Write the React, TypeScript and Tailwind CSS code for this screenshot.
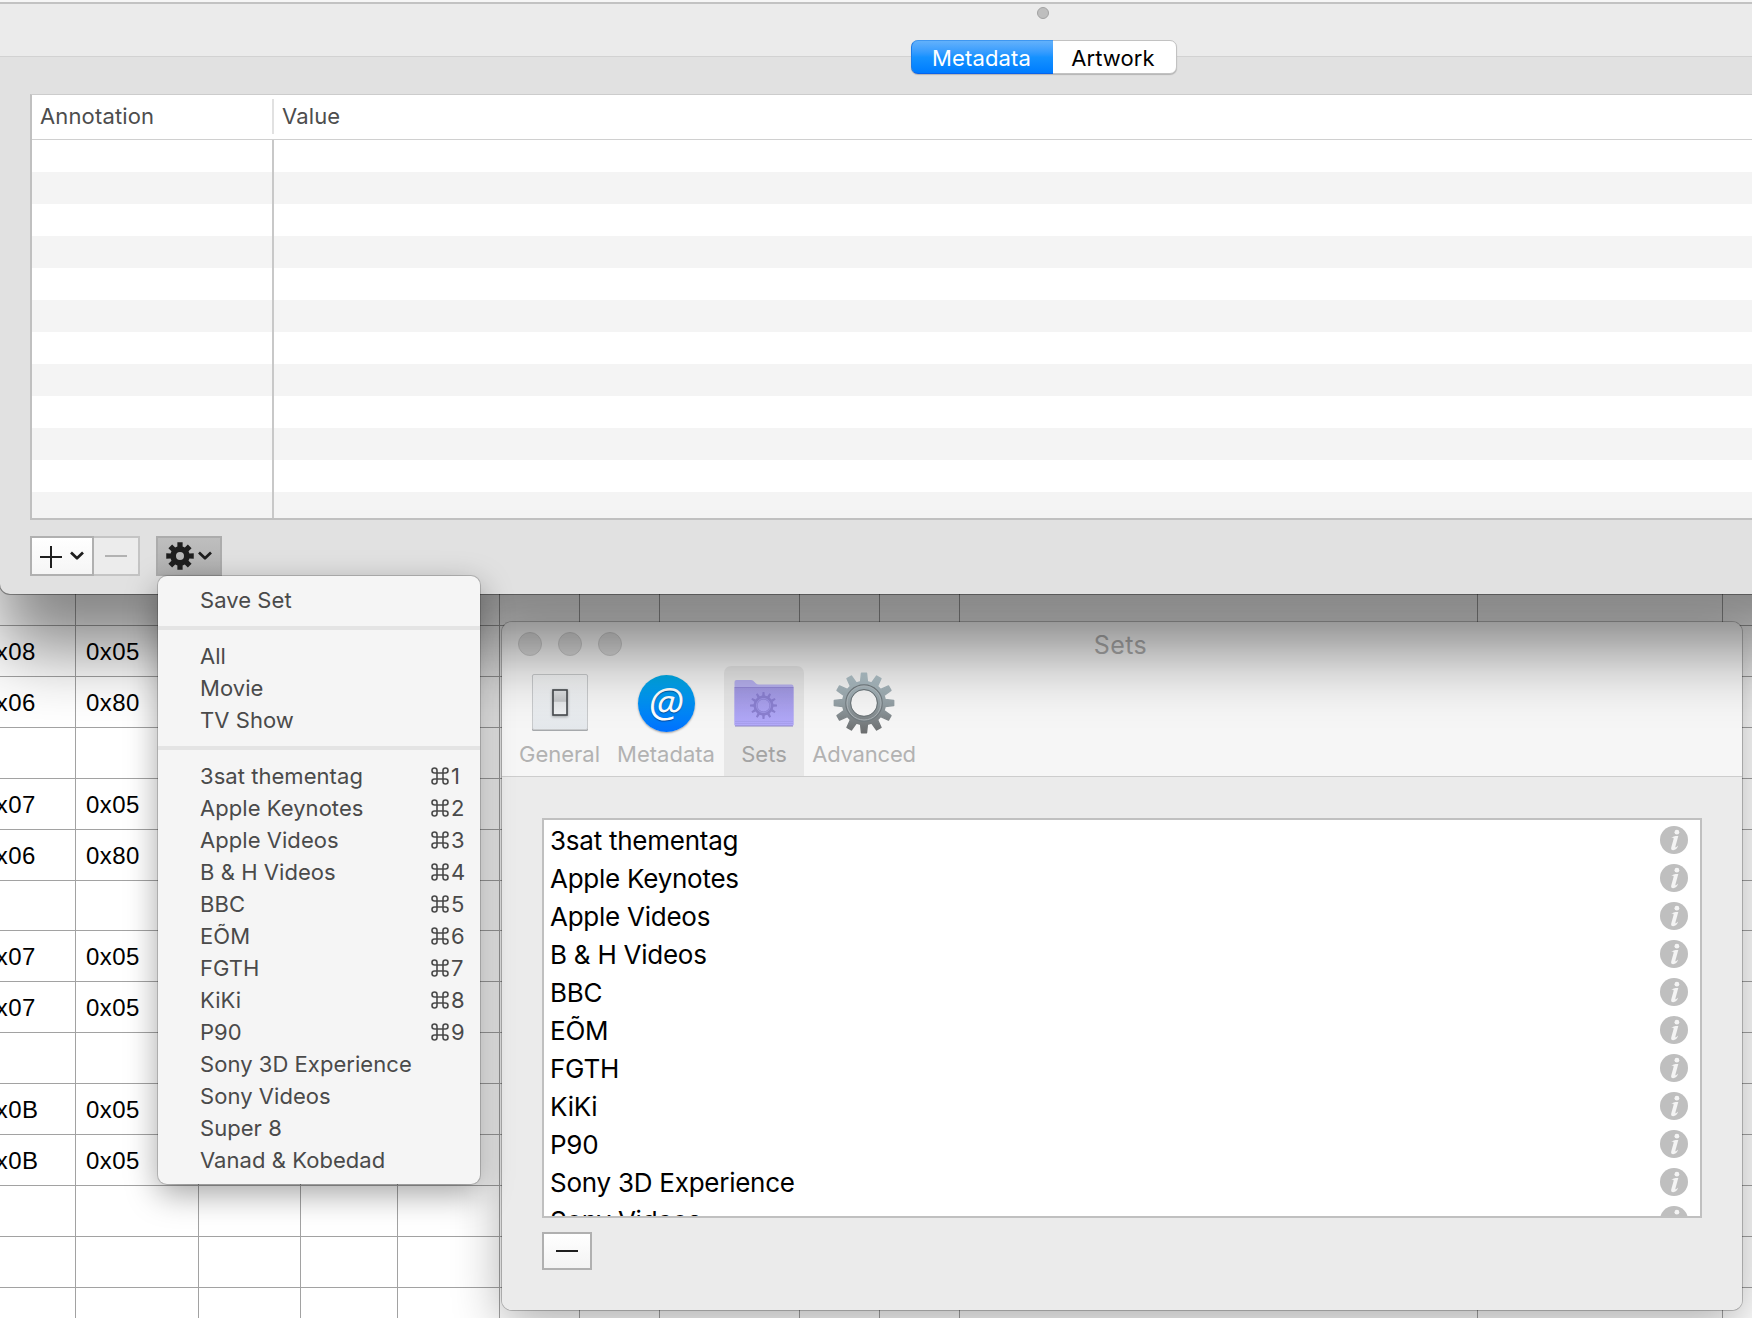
import React from "react";

const LIST = [
  "3sat thementag",
  "Apple Keynotes",
  "Apple Videos",
  "B & H Videos",
  "BBC",
  "EÕM",
  "FGTH",
  "KiKi",
  "P90",
  "Sony 3D Experience",
  "Sony Videos",
  "Super 8",
  "Vanad & Kobedad",
];

const HEX_ROWS: [string, string][] = [
  ["", ""],
  ["0x08", "0x05"],
  ["0x06", "0x80"],
  ["", ""],
  ["0x07", "0x05"],
  ["0x06", "0x80"],
  ["", ""],
  ["0x07", "0x05"],
  ["0x07", "0x05"],
  ["", ""],
  ["0x0B", "0x05"],
  ["0x0B", "0x05"],
  ["", ""],
  ["", ""],
  ["", ""],
];

// Builds a toothed ring outline; tooth flanks taper from root to tip.
function gearPath(n: number, outer: number, root: number, tip: number, base: number) {
  const pts: string[] = [];
  for (let i = 0; i < n; i++) {
    const a = (i / n) * Math.PI * 2 - Math.PI / 2;
    const p = (r: number, d: number) =>
      `${(r * Math.cos(a + d)).toFixed(2)} ${(r * Math.sin(a + d)).toFixed(2)}`;
    pts.push(`L${p(root, -base)}L${p(outer, -tip)}L${p(outer, tip)}L${p(root, base)}`);
  }
  return "M" + pts.join("").slice(1) + "Z";
}

const ring = (r: number) => `M${r} 0A${r} ${r} 0 1 0 ${-r} 0A${r} ${r} 0 1 0 ${r} 0Z`;

function Chevron() {
  return (
    <svg width="14" height="10" viewBox="0 0 14 10" fill="none" stroke="#1e1e1e" strokeWidth="2.7">
      <path d="M1 1.5L7 7.3L13 1.5" strokeLinejoin="round" />
    </svg>
  );
}

function InfoIcon() {
  return (
    <svg width="28" height="28" viewBox="0 0 28 28" className="shrink-0">
      <circle cx="14" cy="14" r="14" fill="#bfbfbf" />
      <circle cx="16.9" cy="6.2" r="2.4" fill="#f4f4f4" />
      <path
        d="M10.8 12.2C12.8 10.4 15.2 9.9 18.3 10L15.4 20.6C15.1 21.9 16.2 21.6 18.2 19.6C17.4 22.6 15.3 24.2 13.2 24.2C11.4 24.2 10.8 23.1 11.3 21.2L13.6 13C13.9 11.7 12.7 11.6 10.8 12.2Z"
        fill="#f4f4f4"
      />
    </svg>
  );
}

function HexTable() {
  return (
    <div className="flex flex-col pt-[575px] font-['Liberation_Sans',Arial,sans-serif] text-[24px] tracking-[0.4px] text-black">
      {HEX_ROWS.map(([a, b], i) => (
        <div
          key={i}
          className={`flex shrink-0 border-b border-[#a2a2a2] leading-[51px] ${i === 6 ? "h-[50px]" : "h-[51px]"}`}
        >
          <div className="w-[76px] shrink-0 border-r border-[#a2a2a2]">
            <span className="-ml-[18px]">{a}</span>
          </div>
          <div className="w-[123px] shrink-0 border-r border-[#a2a2a2] pl-[10px]">{b}</div>
          <div className="w-[102px] shrink-0 border-r border-[#a2a2a2]" />
          <div className="w-[97px] shrink-0 border-r border-[#a2a2a2]" />
          <div className="w-[102px] shrink-0 border-r border-[#a2a2a2]" />
          <div className="w-[80px] shrink-0 border-r border-[#a2a2a2]" />
          <div className="w-[80px] shrink-0 border-r border-[#a2a2a2]" />
          <div className="w-[140px] shrink-0 border-r border-[#a2a2a2]" />
          <div className="w-[80px] shrink-0 border-r border-[#a2a2a2]" />
          <div className="w-[80px] shrink-0 border-r border-[#a2a2a2]" />
          <div className="w-[518px] shrink-0 border-r border-[#a2a2a2]" />
          <div className="w-[245px] shrink-0 border-r border-[#a2a2a2]" />
        </div>
      ))}
    </div>
  );
}

function GeneralIcon() {
  return (
    <svg width="58" height="58" viewBox="0 0 58 58">
      <defs>
        <linearGradient id="plate" x1="0" y1="0" x2="0" y2="1">
          <stop offset="0" stopColor="#f4f5f6" />
          <stop offset="1" stopColor="#e4e8ec" />
        </linearGradient>
        <linearGradient id="rocker" x1="0" y1="0" x2="0" y2="1">
          <stop offset="0" stopColor="#e2e4e6" />
          <stop offset="0.45" stopColor="#c4c6c8" />
          <stop offset="0.5" stopColor="#e6e8ea" />
          <stop offset="1" stopColor="#eef0f2" />
        </linearGradient>
        <filter id="soft" x="-50%" y="-50%" width="200%" height="200%">
          <feGaussianBlur stdDeviation="1.5" />
        </filter>
      </defs>
      <rect x="1" y="1" width="56" height="56" rx="1.5" fill="#a6a9ac" />
      <rect x="1.5" y="0.5" width="55" height="55" rx="1.5" fill="url(#plate)" stroke="#c8cacc" />
      <rect x="21" y="16" width="16" height="27" fill="#8a8d90" filter="url(#soft)" opacity="0.7" />
      <rect x="22" y="16" width="14" height="25" fill="url(#rocker)" stroke="#45494d" strokeWidth="1.6" />
    </svg>
  );
}

function AtIcon() {
  return (
    <div className="mt-px flex h-[57px] w-[57px] items-center justify-center rounded-full bg-linear-to-b from-[#00ace8] to-[#0070ff] font-['Open_Sans',sans-serif] text-[41px] leading-none text-white shadow-[0_1px_2px_rgba(0,0,0,0.35)]">
      <span className="-mt-[5px] italic [text-shadow:0_1px_1px_rgba(0,40,100,0.6)]">@</span>
    </div>
  );
}

function FolderIcon() {
  return (
    <svg width="60" height="50" viewBox="0 0 60 50" className="mt-[5px]">
      <defs>
        <linearGradient id="folder" x1="0" y1="0" x2="0" y2="1">
          <stop offset="0" stopColor="#a198e2" />
          <stop offset="1" stopColor="#b3aafb" />
        </linearGradient>
      </defs>
      <path d="M0.5 3Q0.5 1 2.5 1H17Q19 1 20.5 3L22 4.5Q23 5.5 25 5.5H57.5Q59.5 5.5 59.5 7.5V46H0.5Z" fill="#b6b0ee" />
      <path d="M0.5 9H59.5V45.5Q59.5 47 58 47H2Q0.5 47 0.5 45.5Z" fill="url(#folder)" />
      <path d="M0.5 8.5H59.5" stroke="#9389d6" />
      <path d="M1 42.5H59M1 44.5H59" stroke="#a39be8" strokeWidth="0.7" />
      <path d="M1 47H59" stroke="#8f87c4" />
      <g transform="translate(29.5 26.5)">
        <path d={gearPath(12, 13.5, 10, 0.07, 0.13) + ring(6)} fill="#8a7fd0" fillRule="evenodd" />
        <circle r="7" fill="none" stroke="#a79fee" strokeWidth="0.8" />
      </g>
    </svg>
  );
}

function AdvancedIcon() {
  return (
    <svg width="64" height="64" viewBox="-32 -32 64 64" className="-mt-[3px]">
      <defs>
        <linearGradient id="steel" x1="0" y1="0" x2="0" y2="1">
          <stop offset="0" stopColor="#b4c6cd" />
          <stop offset="0.5" stopColor="#95a1a6" />
          <stop offset="1" stopColor="#6c6e6f" />
        </linearGradient>
      </defs>
      <path
        d={gearPath(12, 29.8, 21.5, 0.085, 0.16) + ring(13.5)}
        fill="url(#steel)"
        fillRule="evenodd"
        stroke="url(#steel)"
        strokeWidth="1.4"
        strokeLinejoin="round"
      />
      <circle r="18.2" fill="none" stroke="#737c80" strokeWidth="1.2" />
      <circle r="17" fill="none" stroke="#b5bdc0" strokeWidth="0.8" />
      <circle r="13.5" fill="none" stroke="#6c7477" strokeWidth="1" />
    </svg>
  );
}

function ToolItem({
  label,
  children,
  className,
  text,
}: {
  label: string;
  children: React.ReactNode;
  className: string;
  text?: string;
}) {
  return (
    <div className={`flex h-[110px] shrink-0 flex-col items-center pt-[8px] ${className}`}>
      <div className="flex h-[64px] items-start justify-center">{children}</div>
      <span className={`text-[22px] leading-[32px] whitespace-nowrap ${text ?? "text-[#b2b2b2]"}`}>{label}</span>
    </div>
  );
}

function SetsWindow() {
  return (
    <div className="absolute top-[622px] left-[502px] flex h-[688px] w-[1240px] flex-col overflow-hidden rounded-[10px] bg-[#ebebeb]">
      <div className="flex h-[155px] shrink-0 flex-col border-b border-[#cdcdcd] bg-[#f6f6f6]">
        <div className="grid h-[44px] grid-cols-3 items-center">
          <div className="flex gap-4 pl-4">
            <i className="size-6 rounded-full border border-[#cccccc] bg-[#dcdcdc]" />
            <i className="size-6 rounded-full border border-[#cccccc] bg-[#dcdcdc]" />
            <i className="size-6 rounded-full border border-[#cccccc] bg-[#dcdcdc]" />
          </div>
          <span className="pt-[3px] pr-[3px] text-center text-[25px] tracking-[0.4px] text-[#aeaeae]">Sets</span>
        </div>
        <div className="flex pl-[13px]">
          <ToolItem label="General" className="w-[89px]">
            <GeneralIcon />
          </ToolItem>
          <ToolItem label="Metadata" className="w-[120px] pl-[4px]">
            <AtIcon />
          </ToolItem>
          <ToolItem label="Sets" className="w-[80px] rounded-t-[7px] bg-[#e7e7e7]" text="text-[#a3a3a3]">
            <FolderIcon />
          </ToolItem>
          <ToolItem label="Advanced" className="w-[120px]" text="text-[#b2b2b2] tracking-[-0.2px]">
            <AdvancedIcon />
          </ToolItem>
        </div>
      </div>
      <div className="mx-10 mt-[41px] h-[400px] shrink-0 overflow-hidden border-2 border-[#c0c0c0] bg-white pt-px text-[26px] tracking-[-0.25px] text-black">
        {LIST.map((s) => (
          <div key={s} className="flex h-[38px] items-center justify-between pr-3 pl-[6px]">
            <span className="pt-px">{s}</span>
            <InfoIcon />
          </div>
        ))}
      </div>
      <div className="mt-[14px] ml-10 flex h-[38px] w-[50px] items-center justify-center border-2 border-[#b0b0b0] bg-linear-to-b from-white to-[#f3f3f3]">
        <i className="h-[2px] w-[22px] bg-[#1e1e1e]" />
      </div>
    </div>
  );
}

function MainWindow() {
  return (
    <div className="absolute top-0 left-0 flex h-[594px] w-[1900px] flex-col rounded-bl-[10px] bg-[#e1e1e1] shadow-[0_0_0_1px_rgba(0,0,0,0.35),0_56px_70px_rgba(0,0,0,0.48)]">
      <div className="h-[57px] shrink-0 border-b border-[#d2d2d2] bg-[#ebebeb]">
        <div className="h-[4px] border-b-2 border-[#c2c2c2] bg-[#f6f6f6]" />
        <i className="mt-[3px] ml-[1037px] block size-3 rounded-full border border-[#a2a2a2] bg-[#bebebe]" />
      </div>
      <div className="absolute top-[40px] left-[911px] flex h-[34px] w-[266px] rounded-[7px] border border-[#c2c2c2] bg-white text-[22px] leading-[34px] shadow-[0_1px_1px_rgba(0,0,0,0.2)]">
        <div className="-m-px w-[142px] rounded-l-[7px] border border-r-0 border-t-[#3f97f0] border-b-[#0663ec] border-l-[#1a7ce8] bg-linear-to-b from-[#62b1fb] via-[#1592ff] to-[#007cff] pr-[2px] text-center tracking-[0.15px] text-white">
          Metadata
        </div>
        <div className="flex-1 pr-[2px] text-center tracking-[0.1px] text-black">Artwork</div>
      </div>
      <div className="mt-[37px] ml-[30px] flex h-[426px] shrink-0 flex-col border-t border-b-2 border-l-2 border-t-[#cccccc] border-b-[#c0c0c0] border-l-[#c0c0c0] bg-white">
        <div className="flex h-[45px] shrink-0 items-start border-b border-[#d0d0d0] text-[22px] leading-[42px] tracking-[0.15px] text-[#4d4d4d]">
          <span className="w-[240px] pl-[8px]">Annotation</span>
          <span className="mt-1 h-[35px] w-[2px] bg-[#e1e1e1]" />
          <span className="pl-[8px]">Value</span>
        </div>
        <div className="flex min-h-0 flex-1">
          <div className="w-[242px] shrink-0 border-r-2 border-[#c8c8c8] bg-[repeating-linear-gradient(to_bottom,#fff_0px,#fff_32px,#f4f4f4_32px,#f4f4f4_64px)]" />
          <div className="flex-1 bg-[repeating-linear-gradient(to_bottom,#fff_0px,#fff_32px,#f4f4f4_32px,#f4f4f4_64px)]" />
        </div>
      </div>
      <div className="mt-4 ml-[30px] flex h-10 shrink-0">
        <div className="flex w-[64px] items-center border-2 border-[#b0b0b0] bg-linear-to-b from-white to-[#f5f5f5] pl-2">
          <svg width="22" height="22" viewBox="0 0 22 22" className="mt-[2px] mr-2" stroke="#1e1e1e" strokeWidth="2">
            <path d="M0 11H22M11 0V22" />
          </svg>
          <Chevron />
        </div>
        <div className="flex w-[46px] items-center justify-center border-2 border-l-0 border-[#c4c4c4] bg-[#ececec]">
          <i className="h-[2px] w-[22px] bg-[#b2b2b2]" />
        </div>
        <div className="ml-4 flex w-[66px] items-center border-2 border-[#acacac] bg-linear-to-b from-[#bebebe] to-[#b0b0b0] pl-2">
          <svg width="28" height="28" viewBox="-14 -14 28 28" className="mr-1">
            <path
              d={gearPath(8, 14, 9.8, 0.19, 0.27) + ring(4)}
              fill="#1e1e1e"
              fillRule="evenodd"
            />
          </svg>
          <Chevron />
        </div>
      </div>
    </div>
  );
}

function Separator() {
  return <div className="my-[10px] h-1 bg-[#e4e4e4]" />;
}

function MenuItem({ label, shortcut }: { label: string; shortcut?: number }) {
  return (
    <div className="flex h-8 items-center justify-between pr-[15px] pl-[42px]">
      <span>{label}</span>
      {shortcut && (
        <span className="flex items-center">
          <svg width="18" height="18" viewBox="0 0 18 18" fill="none" stroke="#4a4a4a" strokeWidth="1.6" className="mr-[2px]">
            <path d="M6 6V3.5A2.5 2.5 0 1 0 3.5 6H14.5A2.5 2.5 0 1 0 12 3.5V14.5A2.5 2.5 0 1 0 14.5 12H3.5A2.5 2.5 0 1 0 6 14.5Z" />
          </svg>
          <span className="w-[14px]">{shortcut}</span>
        </span>
      )}
    </div>
  );
}

function Menu() {
  return (
    <div className="absolute top-[576px] left-[158px] h-[608px] w-[322px] rounded-[9px] bg-[#f5f5f5] py-2 text-[22px] tracking-[0.05px] text-[#4a4a4a] shadow-[0_0_0_1px_rgba(0,0,0,0.18),0_10px_32px_rgba(0,0,0,0.36)]">
      <MenuItem label="Save Set" />
      <Separator />
      <MenuItem label="All" />
      <MenuItem label="Movie" />
      <MenuItem label="TV Show" />
      <Separator />
      {LIST.map((s, i) => (
        <MenuItem key={s} label={s} shortcut={i < 9 ? i + 1 : undefined} />
      ))}
    </div>
  );
}

export default function App() {
  return (
    <div className="relative h-[1318px] w-[1752px] overflow-hidden bg-white font-[Inter,'Noto_Sans',sans-serif]">
      <HexTable />
      <div className="absolute top-[622px] left-[502px] h-[688px] w-[1240px] rounded-[10px] shadow-[0_0_0_1px_rgba(0,0,0,0.22),0_14px_50px_rgba(0,0,0,0.32)]" />
      <SetsWindow />
      <MainWindow />
      <Menu />
    </div>
  );
}
